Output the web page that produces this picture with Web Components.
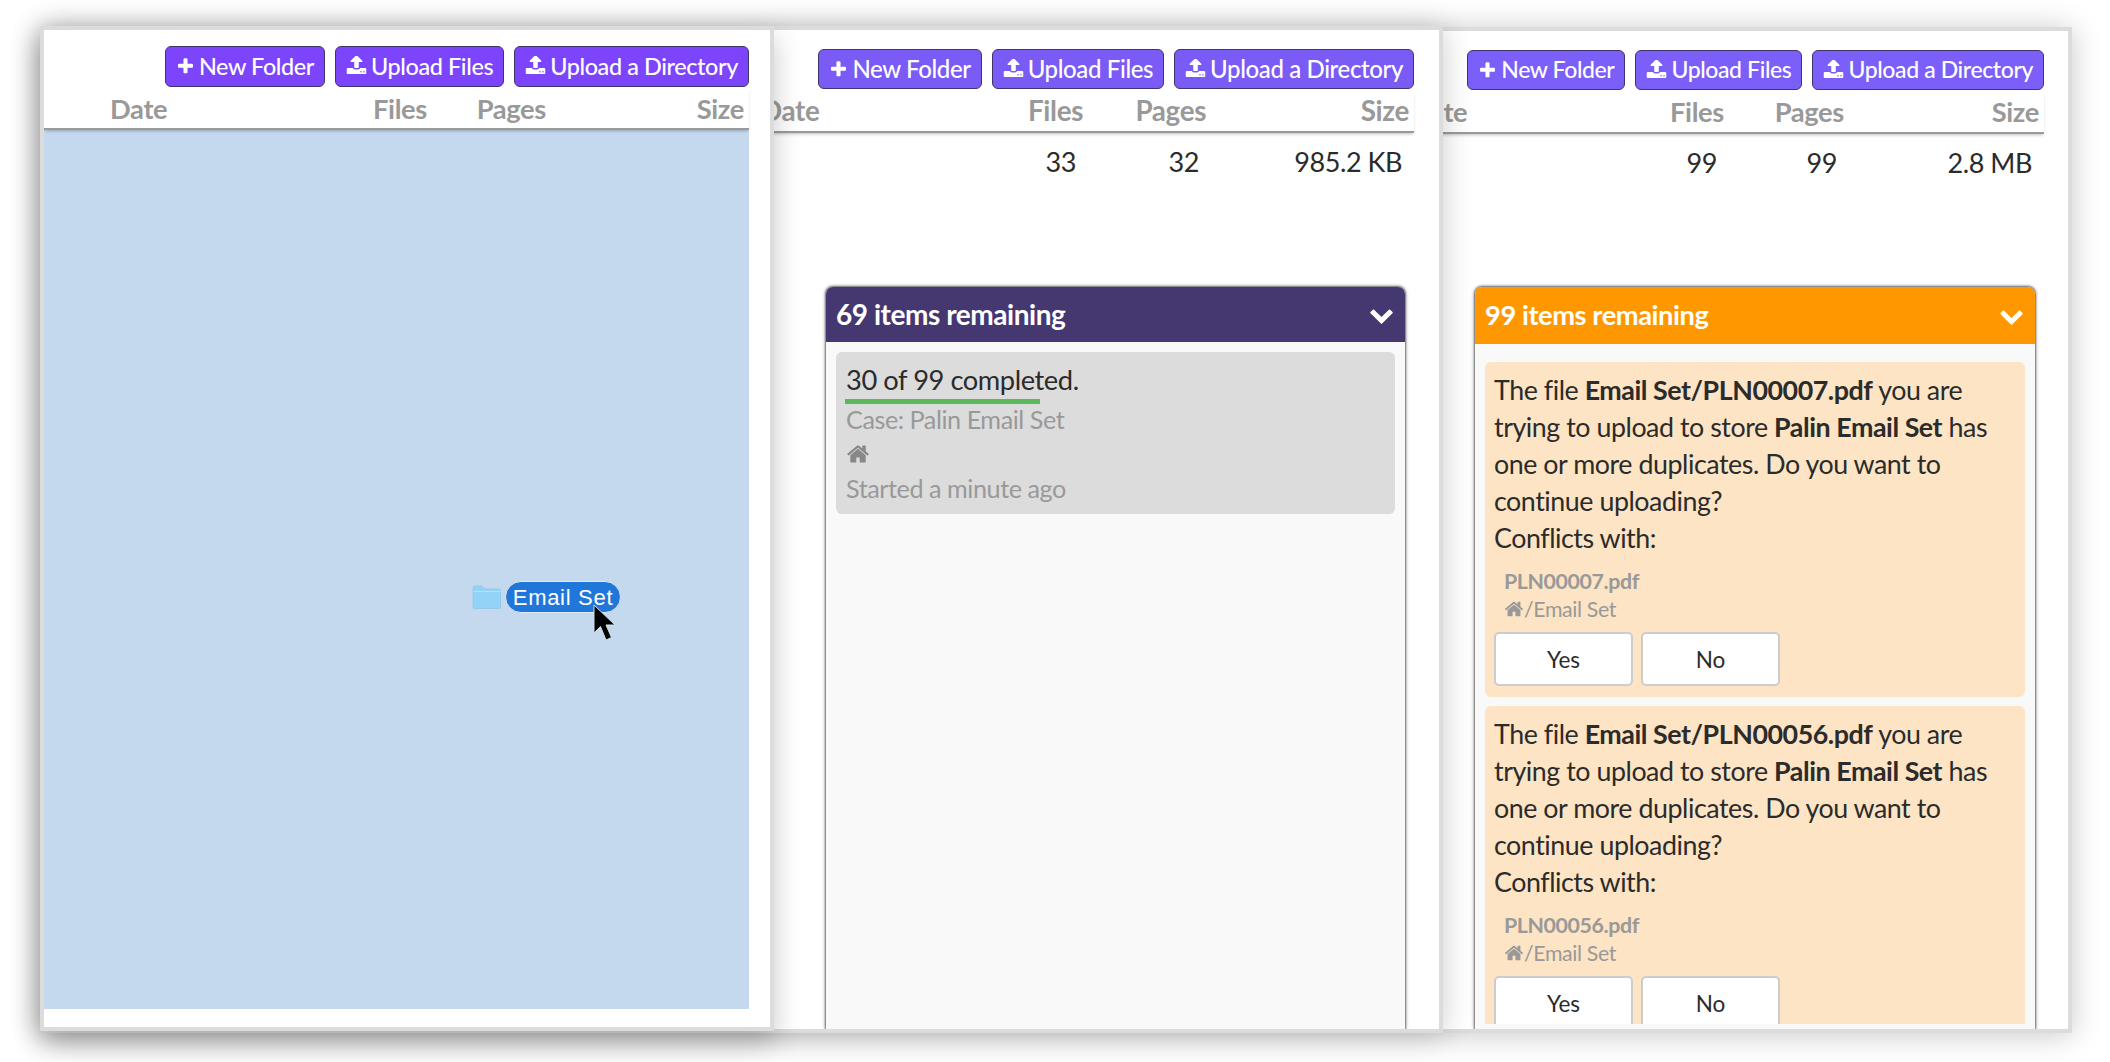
<!DOCTYPE html>
<html>
<head>
<meta charset="utf-8">
<title>Upload</title>
<style>
  html, body { margin: 0; height: 100%; background: #fff; overflow: hidden; }
  body { font-family: Lato, "Liberation Sans", sans-serif; color: #2b2b2b; }
</style>
</head>
<body>

<file-window style="--x:40px; --y:27px; --w:2032px; --h:1006px; --z:1; --shadow:0 2px 28px rgba(0,0,0,.22); --top:19px; --btn-h:40px; --btn-font:23px; --btn:#7b5ff8; --pad-right:24px; --head-h:41px; --head-font:27.3px; --date-x:1366px; --c1:117px; --c2:120px; --c3:195px;">
  <list-row files="99" pages="99" size="2.8 MB"></list-row>
  <upload-panel slot="over" title="99 items remaining" style="--x:1431px; --y:256px; --w:560px; --bar:#ff9800; --h-h:57px; --pad-top:18px; --title-font:27.3px;">
    <conflict-card file="Email Set/PLN00007.pdf" name="PLN00007.pdf"></conflict-card>
    <conflict-card file="Email Set/PLN00056.pdf" name="PLN00056.pdf"></conflict-card>
  </upload-panel>
</file-window>

<file-window style="--x:40px; --y:26px; --w:1403px; --h:1007px; --z:2; --shadow:0 2px 28px rgba(0,0,0,.2); --top:19px; --btn-h:40px; --btn-font:24px; --btn:#7a5bf5; --pad-right:25px; --head-h:41px; --head-font:27.8px; --date-x:717px; --c1:120px; --c2:123px; --c3:203px;">
  <list-row files="33" pages="32" size="985.2 KB"></list-row>
  <upload-panel slot="over" title="69 items remaining" style="--x:782px; --y:257px; --w:579px; --bar:#45376f; --h-h:55px; --pad-top:10px; --title-font:28px;">
    <progress-card></progress-card>
  </upload-panel>
</file-window>

<file-window style="--x:40px; --y:26px; --w:734px; --h:1005px; --z:3; --shadow:0 12px 26px rgba(0,0,0,.22); --top:16px; --btn-h:41px; --btn-font:23.4px; --btn:#7c45fb; --pad-right:21px; --head-h:40px; --head-font:27.3px; --date-x:66px; --c1:127px; --c2:119px; --c3:198px;">
  <drop-zone></drop-zone>
</file-window>

<script>
  const ICONS = {
    plus: 'M1600 736v192q0 40-28 68t-68 28h-416v416q0 40-28 68t-68 28h-192q-40 0-68-28t-28-68v-416h-416q-40 0-68-28t-28-68v-192q0-40 28-68t68-28h416v-416q0-40 28-68t68-28h192q40 0 68 28t28 68v416h416q40 0 68 28t28 68z',
    upload: 'M1344 1344q0-26-19-45t-45-19-45 19-19 45 19 45 45 19 45-19 19-45zm256 0q0-26-19-45t-45-19-45 19-19 45 19 45 45 19 45-19 19-45zm128-224v320q0 40-28 68t-68 28h-1472q-40 0-68-28t-28-68v-320q0-40 28-68t68-28h427q21 56 70.5 92t110.5 36h256q61 0 110.5-36t70.5-92h427q40 0 68 28t28 68zm-325-648q-17 40-59 40h-256v448q0 26-19 45t-45 19h-256q-26 0-45-19t-19-45v-448h-256q-42 0-59-40-17-39 14-69l448-448q18-19 45-19t45 19l448 448q31 30 14 69z',
    home: 'M1472 992v480q0 26-19 45t-45 19h-384v-384h-256v384h-384q-26 0-45-19t-19-45v-480q0-1 .5-3t.5-3l575-474 575 474q1 2 1 6zm223-69l-62 74q-8 9-21 11h-3q-13 0-21-7l-692-577-692 577q-12 8-24 7-13-2-21-11l-62-74q-8-10-7-23.5t11-21.5l719-599q32-26 76-26t76 26l244 204v-195q0-14 9-23t23-9h192q14 0 23 9t9 23v408l219 182q10 8 11 21.5t-7 23.5z',
    chevron: 'M1683 808l-742 741q-19 19-45 19t-45-19l-742-741q-19-19-19-45.5t19-45.5l166-165q19-19 45-19t45 19l531 531 531-531q19-19 45-19t45 19l166 165q19 19 19 45.5t-19 45.5z'
  };

  class FaIcon extends HTMLElement {
    connectedCallback() {
      const size = this.getAttribute('size') || '1em';
      this.attachShadow({ mode: 'open' });
      this.shadowRoot.innerHTML = `
        <style>
          :host { display: inline-flex; flex: none; width: ${size}; height: ${size}; }
          svg { width: 100%; height: 100%; fill: currentColor; display: block; }
        </style>
        <svg viewBox="0 0 1792 1792"><path d="${ICONS[this.getAttribute('name')]}"/></svg>
      `;
    }
  }

  class ToolButton extends HTMLElement {
    connectedCallback() {
      const icon = this.getAttribute('icon');
      this.attachShadow({ mode: 'open' });
      this.shadowRoot.innerHTML = `
        <style>
          :host {
            display: inline-flex;
            align-items: center;
            gap: 4px;
            box-sizing: border-box;
            height: var(--btn-h);
            padding: 0 10px 2px;
            background: var(--btn);
            color: #fff;
            border: 1.5px solid #40356b;
            border-radius: 6px;
            font-size: var(--btn-font);
            font-weight: 500;
            letter-spacing: -.38px;
            white-space: nowrap;
          }
          fa-icon { margin-top: 2px; }
        </style>
        <fa-icon name="${icon}" size="${icon === 'plus' ? 19 : 21}px"></fa-icon>
        <slot></slot>
      `;
    }
  }

  class ListHeader extends HTMLElement {
    connectedCallback() {
      this.attachShadow({ mode: 'open' });
      this.shadowRoot.innerHTML = `
        <style>
          :host {
            display: grid;
            grid-template-columns: 1fr var(--c1) var(--c2) var(--c3);
            align-items: center;
            box-sizing: border-box;
            height: var(--head-h);
            margin-top: 3px;
            padding: 0 5px 2px var(--date-x);
            background: #fff;
            border-bottom: 2px solid #9a9a9a;
            box-shadow: 0 2px 3px -1px rgba(0,0,0,.25);
            color: #999;
            font-size: var(--head-font);
            font-weight: 700;
            letter-spacing: -.35px;
            position: relative;
            z-index: 1;
          }
          div { text-align: right; }
          div:first-of-type { text-align: left; }
        </style>
        <div>Date</div><div>Files</div><div>Pages</div><div>Size</div>
      `;
    }
  }

  class ListRow extends HTMLElement {
    connectedCallback() {
      this.attachShadow({ mode: 'open' });
      this.shadowRoot.innerHTML = `
        <style>
          :host {
            display: grid;
            grid-template-columns: 1fr var(--c1) var(--c2) var(--c3);
            align-items: center;
            height: 57px;
            padding: 0 5px 0 var(--date-x);
            font-size: 27px;
            letter-spacing: -.45px;
          }
          div { text-align: right; padding-right: 7px; }
        </style>
        <div></div>
        <div>${this.getAttribute('files')}</div>
        <div>${this.getAttribute('pages')}</div>
        <div>${this.getAttribute('size')}</div>
      `;
    }
  }

  class FileWindow extends HTMLElement {
    connectedCallback() {
      this.attachShadow({ mode: 'open' });
      this.shadowRoot.innerHTML = `
        <style>
          :host {
            position: absolute;
            left: var(--x);
            top: var(--y);
            width: var(--w);
            height: var(--h);
            z-index: var(--z);
            box-sizing: border-box;
            display: block;
            background: #fff;
            border: 4px solid #dcdcdc;
            box-shadow: var(--shadow);
          }
          .clip {
            position: relative;
            height: 100%;
            overflow: hidden;
            display: flex;
            flex-direction: column;
          }
          .list {
            flex: 1;
            min-height: 0;
            display: flex;
            flex-direction: column;
            padding-right: var(--pad-right);
          }
          .tools {
            display: flex;
            justify-content: flex-end;
            gap: 10px;
            padding-top: var(--top);
          }
        </style>
        <div class="clip">
          <div class="list">
            <div class="tools">
              <tool-button icon="plus">New Folder</tool-button>
              <tool-button icon="upload">Upload Files</tool-button>
              <tool-button icon="upload">Upload a Directory</tool-button>
            </div>
            <list-header></list-header>
            <slot></slot>
          </div>
          <slot name="over"></slot>
        </div>
      `;
    }
  }

  class DropZone extends HTMLElement {
    connectedCallback() {
      this.attachShadow({ mode: 'open' });
      this.shadowRoot.innerHTML = `
        <style>
          :host {
            display: block;
            position: relative;
            height: 879px;
            background: #c4d9ee;
          }
          .ghost {
            position: absolute;
            left: 428px;
            top: 451px;
            display: flex;
            align-items: center;
            gap: 4px;
          }
          .pill {
            box-sizing: border-box;
            height: 32px;
            width: 116px;
            padding-top: 1px;
            display: flex;
            align-items: center;
            justify-content: center;
            background: #2176d9;
            border: 1px solid #dfeaf6;
            border-radius: 16px;
            color: #fff;
            font-family: "Liberation Sans", Arial, sans-serif;
            font-size: 22px;
            letter-spacing: .7px;
          }
          .cursor { position: absolute; left: 121px; top: 23px; }
        </style>
        <div class="ghost">
          <svg width="29" height="24" viewBox="0 0 29 24">
            <path d="M1 3q0-2 2-2h7l3 3h14q1.500 0 1.500 1.500V22q0 1.500-1.500 1.500H2.500Q1 23.500 1 22z" fill="#93d3f7" stroke="#8cbfe0" stroke-width=".6"/>
            <path d="M1 6.500h27.500" stroke="#b4e2fb" stroke-width="1"/>
          </svg>
          <div class="pill">Email Set</div>
          <svg class="cursor" width="24" height="38" viewBox="0 0 24 38">
            <path d="M1 1 1 29 7.500 22.500 13 36 18.500 33.500 13 21 22 21Z" fill="#000" stroke="#cfdfee" stroke-width="1"/>
          </svg>
        </div>
      `;
    }
  }

  class UploadPanel extends HTMLElement {
    connectedCallback() {
      this.attachShadow({ mode: 'open' });
      this.shadowRoot.innerHTML = `
        <style>
          :host {
            position: absolute;
            left: var(--x);
            top: var(--y);
            width: var(--w);
            bottom: 0;
            display: flex;
            flex-direction: column;
            background: #f9f9f9;
            border-radius: 7px 7px 0 0;
            box-shadow: 0 0 2px 1px rgba(0,0,0,.5), 0 0 5px rgba(0,0,0,.3);
            padding-bottom: 5px;
            box-sizing: border-box;
          }
          header {
            flex: none;
            height: var(--h-h);
            box-sizing: border-box;
            padding: 0 11px 2px 10px;
            display: flex;
            align-items: center;
            justify-content: space-between;
            background: var(--bar);
            border-radius: 7px 7px 0 0;
            color: #fff;
            font-size: var(--title-font);
            font-weight: 700;
            letter-spacing: -.45px;
          }
          fa-icon { margin-top: 2px; }
          .items {
            flex: 1;
            min-height: 0;
            overflow: hidden;
            display: flex;
            flex-direction: column;
            gap: 9px;
            padding: var(--pad-top) 10px 0;
          }
        </style>
        <header>
          <span>${this.getAttribute('title')}</span>
          <fa-icon name="chevron" size="25px"></fa-icon>
        </header>
        <div class="items"><slot></slot></div>
      `;
      this.removeAttribute('title');
    }
  }

  class ProgressCard extends HTMLElement {
    connectedCallback() {
      this.attachShadow({ mode: 'open' });
      this.shadowRoot.innerHTML = `
        <style>
          :host {
            display: block;
            flex: none;
            padding: 10px 10px 12px;
            background: #dcdcdc;
            border-radius: 6px;
            letter-spacing: -.45px;
          }
          .title { font-size: 27.3px; line-height: 36px; }
          .bar { width: 195px; height: 5px; margin: 1px 0 0 -1px; background: #5cb85c; }
          .meta { color: #999; font-size: 25.2px; line-height: 30px; }
          .home { display: flex; align-items: center; height: 40px; color: #888; }
          .ago { line-height: 28px; }
        </style>
        <div class="title">30 of 99 completed.</div>
        <div class="bar"></div>
        <div class="meta">Case: Palin Email Set</div>
        <div class="meta home"><fa-icon name="home" size="24px"></fa-icon></div>
        <div class="meta ago">Started a minute ago</div>
      `;
    }
  }

  class ConflictCard extends HTMLElement {
    connectedCallback() {
      this.attachShadow({ mode: 'open' });
      this.shadowRoot.innerHTML = `
        <style>
          :host {
            display: block;
            flex: none;
            padding: 10px 9px 11px;
            background: #fce4c4;
            border-radius: 6px;
            font-size: 26.8px;
            letter-spacing: -.45px;
            line-height: 37px;
          }
          b { font-weight: 700; }
          .dup { padding-left: 10px; margin-top: 10px; color: #999; font-size: 21.3px; letter-spacing: -.35px; line-height: 28px; }
          .dup div:first-of-type { font-weight: 700; }
          .path { display: flex; align-items: center; }
          .btns { display: flex; gap: 8px; margin-top: 9px; }
          button {
            box-sizing: border-box;
            width: 139px;
            height: 54px;
            padding: 0;
            background: #fff;
            border: 2px solid #ccc;
            border-radius: 5px;
            color: #2b2b2b;
            font: 22.5px Lato, "Liberation Sans", sans-serif;
          }
        </style>
        The file <b>${this.getAttribute('file')}</b> you are trying to upload to store <b>Palin Email Set</b> has one or more duplicates. Do you want to continue uploading?<br>
        Conflicts with:
        <div class="dup">
          <div>${this.getAttribute('name')}</div>
          <div class="path"><fa-icon name="home" size="20px"></fa-icon>/Email Set</div>
        </div>
        <div class="btns"><button>Yes</button><button>No</button></div>
      `;
    }
  }

  customElements.define('fa-icon', FaIcon);
  customElements.define('tool-button', ToolButton);
  customElements.define('list-header', ListHeader);
  customElements.define('list-row', ListRow);
  customElements.define('file-window', FileWindow);
  customElements.define('drop-zone', DropZone);
  customElements.define('upload-panel', UploadPanel);
  customElements.define('progress-card', ProgressCard);
  customElements.define('conflict-card', ConflictCard);
</script>
</body>
</html>
